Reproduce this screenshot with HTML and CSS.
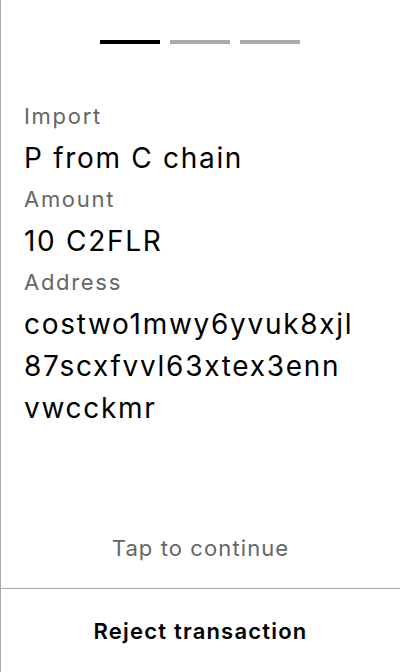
FILE: index.html
```html
<!DOCTYPE html>
<html lang="en">
<head>
<meta charset="utf-8">
<title>Import transaction</title>
<link rel="stylesheet" href="styles.css">
</head>
<body>
<div class="screen">
  <div class="steps">
    <span class="step active"></span>
    <span class="step"></span>
    <span class="step"></span>
  </div>
  <div class="fields">
    <div class="label">Import</div>
    <div class="value">P from C chain</div>
    <div class="label">Amount</div>
    <div class="value">10 C2FLR</div>
    <div class="label">Address</div>
    <div class="value address">costwo1mwy6yvuk8xjl<wbr>87scxfvvl63xtex3enn<wbr>vwcckmr</div>
  </div>
  <div class="tap">Tap to continue</div>
  <div class="footer">
    <button class="reject">Reject transaction</button>
  </div>
</div>
</body>
</html>
```
FILE: styles.css
```css
html, body {
  margin: 0;
  padding: 0;
  background: #fff;
}
body {
  font-family: Inter, "Noto Sans", sans-serif;
  color: #000;
}
.screen {
  box-sizing: border-box;
  height: 672px;
  border-left: 1px solid #aaa;
  display: flex;
  flex-direction: column;
}
.steps {
  display: flex;
  justify-content: center;
  gap: 10px;
  padding-top: 40px;
  padding-right: 1px;
}
.step {
  width: 60px;
  height: 4px;
  background: #aaa;
}
.step.active {
  background: #000;
}
.fields {
  display: flex;
  flex-direction: column;
  gap: 4px;
  padding: 0 22px 0 23px;
  margin-top: 56px;
}
.label {
  font-size: 22px;
  line-height: 33px;
  color: #666;
  letter-spacing: 1.7px;
}
.value {
  font-size: 28px;
  line-height: 42px;
  color: #000;
  letter-spacing: 1.7px;
}
.address {
  overflow-wrap: anywhere;
}
.tap {
  margin-top: auto;
  text-align: center;
  font-size: 22px;
  line-height: 33px;
  color: #666;
  letter-spacing: 1.1px;
  padding-bottom: 23px;
}
.footer {
  border-top: 1px solid #aaa;
  height: 83px;
  display: flex;
  align-items: center;
  justify-content: center;
}
.reject {
  border: 0;
  background: none;
  padding: 0;
  font-family: inherit;
  font-size: 22px;
  font-weight: 600;
  letter-spacing: 1.2px;
  color: #000;
}
```
